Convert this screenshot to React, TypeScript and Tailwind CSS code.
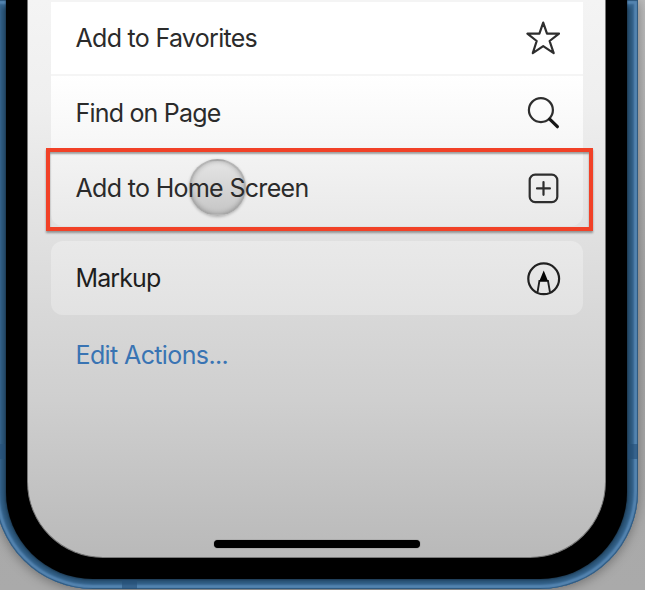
import type { ReactNode } from "react";

function StarIcon() {
  return (
    <svg width="36" height="36" viewBox="0 0 36 36" fill="none" stroke="#2e2e2e" strokeWidth="2.2" strokeLinejoin="round">
      <path d="M18.2 2.6 L22 13.6 H34 L24.6 21 L28.7 33.2 L18.2 26.2 L7.8 33.2 L11.7 21 L2.4 13.6 H14.4 Z" />
    </svg>
  );
}

function SearchIcon() {
  return (
    <svg width="36" height="36" viewBox="0 0 36 36" fill="none" stroke="#2e2e2e" strokeLinecap="round">
      <circle cx="15.9" cy="15.1" r="12" strokeWidth="2.2" />
      <path d="M24.7 24.1 L32.4 31.7" stroke="#161616" strokeWidth="3.2" />
    </svg>
  );
}

function PlusSquareIcon() {
  return (
    <svg width="36" height="36" viewBox="0 0 36 36" fill="none" stroke="#2e2e2e" strokeWidth="2.2" strokeLinecap="round">
      <rect x="4.7" y="4.6" width="27.6" height="27.6" rx="5.5" />
      <path d="M18.5 12 V24.8 M12 18.4 H24.9" />
    </svg>
  );
}

function MarkupIcon() {
  return (
    <svg width="36" height="36" viewBox="0 0 36 36" fill="none" stroke="#202020" strokeWidth="2.2">
      <circle cx="18.7" cy="18.8" r="15.4" />
      <path d="M12.5 32.4 L14.4 20.9 H23 L25 32.4" strokeWidth="1.9" />
      <path d="M18.7 10.6 L23.1 21.2 H14.3 Z" fill="#050505" stroke="none" />
    </svg>
  );
}

function Row({ label, icon, className }: { label: ReactNode; icon: ReactNode; className: string }) {
  return (
    <div className={`flex items-center justify-between pl-[24.5px] pr-[22px] ${className}`}>
      {label}
      {icon}
    </div>
  );
}

export default function App() {
  return (
    <div className="h-[590px] w-[645px] overflow-hidden bg-linear-to-b from-[#bcbcbc] via-[#a6a6a6] to-[#aaaaaa] font-['Inter','Liberation_Sans',sans-serif] text-[25px] leading-[30px] text-[#2b2b2b]">
      <div className="relative -ml-[5px] h-[589px] w-[643px] rounded-b-[98px] bg-[#244a69] px-[11px] pb-[10px] shadow-[0_2px_12px_rgba(0,0,0,0.35),inset_0_0_1px_1px_#2c567c,inset_0_0_2px_4px_#5585b1,inset_0_0_4px_7px_#376690]">
        <div className="h-full rounded-b-[87px] bg-black px-[21px] pb-[21px] shadow-[0_0_2px_#101c26]">
          <main className="flex h-full flex-col rounded-b-[76px] border-x border-b border-[#777] bg-[linear-gradient(#f4f4f4_0px,#efefef_100px,#e1e1e1_230px,#cfcfcf_400px,#b9b9b9_557px)] pl-[23px] pr-[22px]">
            <section className="rounded-b-[12px] bg-[linear-gradient(#ffffff_0px,#ffffff_75px,#f7f7f7_142px,#f2f2f2_160px,#e9e9e9_227px)]">
              <div className="h-[2px] bg-[#f4f4f4]" />
              <Row className="h-[74px] border-b-2 border-[#f5f5f5]" label={<span className="tracking-[-0.7px]">Add to Favorites</span>} icon={<StarIcon />} />
              <Row className="h-[74px]" label={<span className="tracking-[-0.8px]">Find on Page</span>} icon={<SearchIcon />} />
              <div className="relative pb-px">
                <div className="absolute top-[9px] left-[138px] h-[57px] w-[57px] rounded-full border-2 border-[#888]/50 bg-linear-to-b from-[#e5e5e5] to-[#c6c6c6] shadow-[0_1px_3px_rgba(0,0,0,0.25),inset_0_0_5px_rgba(0,0,0,0.25)]" />
                <Row className="h-[75px]" label={<span className="relative tracking-[-0.67px]">Add to Home Screen</span>} icon={<PlusSquareIcon />} />
                <div className="absolute -top-[2px] -right-[10px] -left-[5px] h-[83px] border-4 border-[#f14127] shadow-[0_2px_2px_rgba(0,0,0,0.35),inset_0_2px_2px_rgba(0,0,0,0.35)]" />
              </div>
            </section>
            <section className="mt-[15px] rounded-[12px] bg-linear-to-b from-[#e9e9e9] to-[#e2e2e2]">
              <Row className="h-[74px]" label={<span className="tracking-[-0.9px] text-[#1e1e1e]">Markup</span>} icon={<MarkupIcon />} />
            </section>
            <a className="mt-[25px] pl-[24.5px] tracking-[-0.62px] text-[#3974b3]">Edit Actions...</a>
            <div className="mt-auto mb-[9px] h-[8px] w-[206px] self-center rounded-full bg-black shadow-[0_0_1px_#333]" />
          </main>
        </div>
        <div className="absolute top-[444px] left-0 h-[15px] w-[10px] bg-[#244f76]/60" />
        <div className="absolute top-[444px] right-0 h-[15px] w-[10px] bg-[#244f76]/60" />
        <div className="absolute bottom-0 left-[127px] h-[9px] w-[15px] bg-[#244f76]/60" />
      </div>
    </div>
  );
}
